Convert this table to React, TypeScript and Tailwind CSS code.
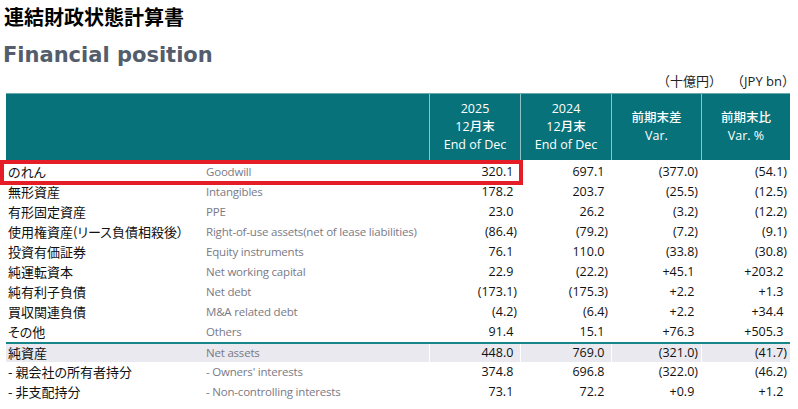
import React from "react";

type Row = { jp: string; en: string; v: string[]; total?: boolean };

const rows: Row[] = [
  { jp: "のれん", en: "Goodwill", v: ["320.1", "697.1", "(377.0)", "(54.1)"] },
  { jp: "無形資産", en: "Intangibles", v: ["178.2", "203.7", "(25.5)", "(12.5)"] },
  { jp: "有形固定資産", en: "PPE", v: ["23.0", "26.2", "(3.2)", "(12.2)"] },
  { jp: "使用権資産(リース負債相殺後）", en: "Right-of-use assets(net of lease liabilities)", v: ["(86.4)", "(79.2)", "(7.2)", "(9.1)"] },
  { jp: "投資有価証券", en: "Equity instruments", v: ["76.1", "110.0", "(33.8)", "(30.8)"] },
  { jp: "純運転資本", en: "Net working capital", v: ["22.9", "(22.2)", "+45.1", "+203.2"] },
  { jp: "純有利子負債", en: "Net debt", v: ["(173.1)", "(175.3)", "+2.2", "+1.3"] },
  { jp: "買収関連負債", en: "M&A related debt", v: ["(4.2)", "(6.4)", "+2.2", "+34.4"] },
  { jp: "その他", en: "Others", v: ["91.4", "15.1", "+76.3", "+505.3"] },
  { jp: "純資産", en: "Net assets", v: ["448.0", "769.0", "(321.0)", "(41.7)"], total: true },
  { jp: "- 親会社の所有者持分", en: "- Owners' interests", v: ["374.8", "696.8", "(322.0)", "(46.2)"] },
  { jp: "- 非支配持分", en: "- Non-controlling interests", v: ["73.1", "72.2", "+0.9", "+1.2"] },
];

const cols = "grid grid-cols-[199px_224px_91px_91px_90px_89px]";

function Num({ s }: { s: string }) {
  const neg = s.startsWith("(");
  return (
    <span>
      {s}
      {!neg && <span className="invisible">)</span>}
    </span>
  );
}

export default function App() {
  return (
    <div className="relative w-[798px] h-[409px] overflow-hidden bg-white">
      <div className="pl-[4px] pt-[4px] h-[30px] text-[20px] leading-[26px] font-bold text-black font-['Noto_Sans_CJK_JP',sans-serif]">
        連結財政状態計算書
      </div>
      <div className="pl-[3px] pt-[10px] h-[65px] text-[21px] leading-[30px] font-bold text-[#535d6b] font-['DejaVu_Sans',sans-serif]">
        Financial position
      </div>
      <div className="absolute top-[71px] right-[3px] flex gap-[9px] text-[13px] leading-[20px] text-[#222] font-['Open_Sans','Noto_Sans_CJK_JP',sans-serif]">
        <span>（十億円）</span>
        <span>（JPY bn）</span>
      </div>

      <div className="absolute left-[6px] top-[93px] w-[784px] font-['Open_Sans','Noto_Sans_CJK_JP',sans-serif]">
        <div className={`${cols} h-[67px] bg-[#08727a] text-white text-[12.5px] leading-[18px] border-t border-[#6aa9ad]`}>
          <div className="col-span-2" />
          {[
            ["2025", "12月末", "End of Dec"],
            ["2024", "12月末", "End of Dec"],
            ["前期末差", "Var."],
            ["前期末比", "Var. %"],
          ].map((lines, i) => (
            <div
              key={i}
              className="flex flex-col items-center justify-center border-l border-[#8fc2c5] font-medium"
            >
              {lines.map((l) => (
                <span key={l}>{l}</span>
              ))}
            </div>
          ))}
        </div>

        <div className="h-[2px]" />

        {rows.map((r) => (
          <div
            key={r.jp}
            className={`${cols} h-[20px] items-center ${
              r.total ? "bg-[#e9e9ef] border-t-2 border-[#17868a]" : ""
            }`}
          >
            <div className="pl-[2px] text-[13px] leading-[18px] text-[#111] whitespace-nowrap font-['Noto_Sans_CJK_JP',sans-serif] [font-feature-settings:'palt']">
              {r.jp}
            </div>
            <div className="pl-px text-[11.5px] leading-[18px] tracking-[-0.2px] text-[#7a7a86] whitespace-nowrap">
              {r.en}
            </div>
            {r.v.map((v, i) => (
              <div
                key={i}
                className={`h-full flex items-center justify-end pr-[3px] text-[12.5px] text-[#111] ${
                  r.total ? "border-l border-white" : ""
                }`}
              >
                <Num s={v} />
              </div>
            ))}
          </div>
        ))}
      </div>

      <div className="absolute left-0 top-[160px] w-[523px] h-[25px] border-[4px] border-[#e51d27]" />
    </div>
  );
}
